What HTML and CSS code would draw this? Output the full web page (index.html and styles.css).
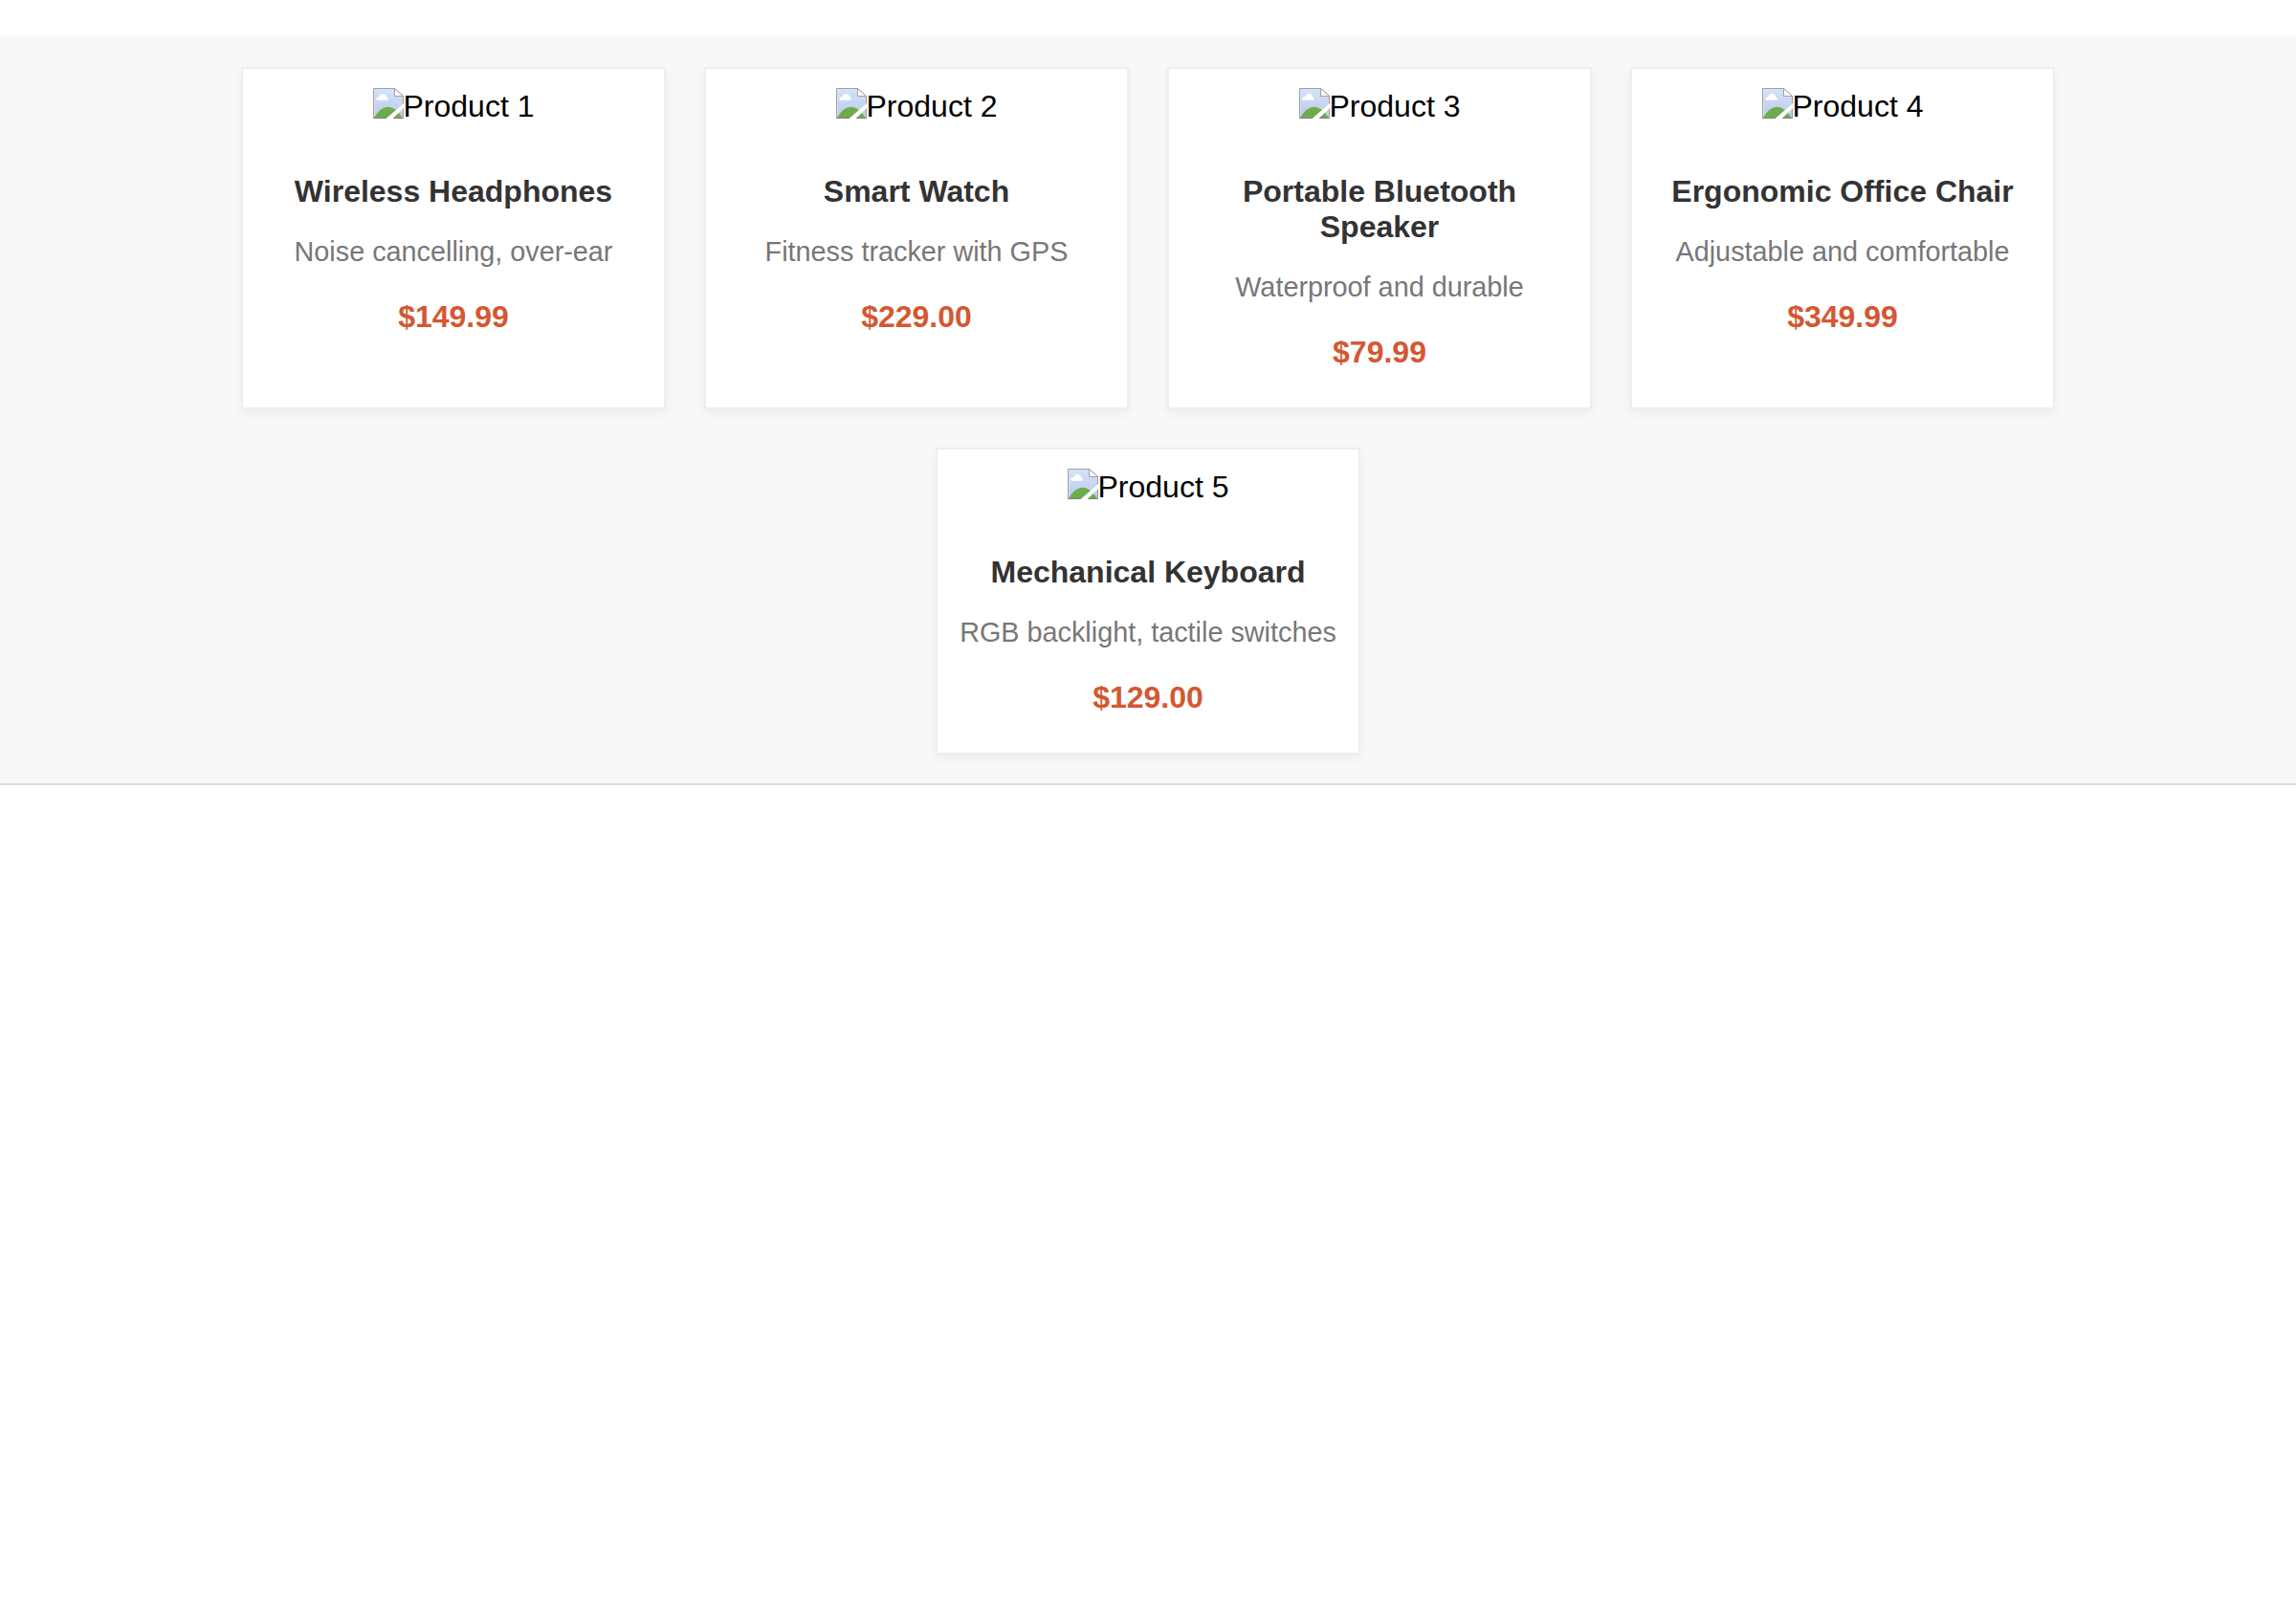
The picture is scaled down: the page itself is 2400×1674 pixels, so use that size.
FILE: index.html
```html
<!DOCTYPE html>
<html lang="en">
<head>
<meta charset="utf-8">
<title>Products</title>
<link rel="stylesheet" href="styles.css">
</head>
<body>
<svg class="defs" aria-hidden="true">
  <defs>
    <linearGradient id="sky" x1="0" y1="0" x2="0" y2="1">
      <stop offset="0" stop-color="#d6e3f9"/>
      <stop offset="1" stop-color="#b9c8ea"/>
    </linearGradient>
    <symbol id="missing" viewBox="0 0 32 32">
      <path d="M.5 .5H22.5L31.5 8.5V31.5H.5Z" fill="url(#sky)" stroke="#a0a0a0"/>
      <path d="M1.500 31V1.500H22" fill="none" stroke="#d6e2f8"/>
      <path d="M4.500 12.700Q3 12.700 3.200 11.200Q3.700 9.500 6.300 9.300Q7.300 6 10.300 6Q13.300 6.200 14 9.200Q16 10 15.900 11.600Q15.700 12.700 14.500 12.700Z" fill="#fff"/>
      <path d="M1 31Q8 19.700 15.500 19.700Q23.500 19.700 30.500 31Z" fill="#6dac4b"/>
      <path d="M.5 31.500H31.500" stroke="#808080"/>
      <path d="M13.500 32L32 16V21L20.500 32Z" fill="#fff"/>
      <path d="M22.500 .5V8.500H31.500Z" fill="#fff" stroke="#a0a0a0"/>
    </symbol>
  </defs>
</svg>
<main class="products">
  <article class="card">
    <div class="picture"><svg class="icon"><use href="#missing"/></svg><span>Product 1</span></div>
    <h3 class="name">Wireless Headphones</h3>
    <p class="description">Noise cancelling, over-ear</p>
    <p class="price">$149.99</p>
  </article>
  <article class="card">
    <div class="picture"><svg class="icon"><use href="#missing"/></svg><span>Product 2</span></div>
    <h3 class="name">Smart Watch</h3>
    <p class="description">Fitness tracker with GPS</p>
    <p class="price">$229.00</p>
  </article>
  <article class="card">
    <div class="picture"><svg class="icon"><use href="#missing"/></svg><span>Product 3</span></div>
    <h3 class="name">Portable Bluetooth Speaker</h3>
    <p class="description">Waterproof and durable</p>
    <p class="price">$79.99</p>
  </article>
  <article class="card">
    <div class="picture"><svg class="icon"><use href="#missing"/></svg><span>Product 4</span></div>
    <h3 class="name">Ergonomic Office Chair</h3>
    <p class="description">Adjustable and comfortable</p>
    <p class="price">$349.99</p>
  </article>
  <article class="card">
    <div class="picture"><svg class="icon"><use href="#missing"/></svg><span>Product 5</span></div>
    <h3 class="name">Mechanical Keyboard</h3>
    <p class="description">RGB backlight, tactile switches</p>
    <p class="price">$129.00</p>
  </article>
</main>
</body>
</html>
```
FILE: styles.css
```css
* {
  box-sizing: border-box;
}

body {
  margin: 0;
  padding-top: 40px;
  background: #fff;
  color: #000;
  font: 32px/37px "Liberation Sans", Arial, sans-serif;
}

.defs {
  display: block;
  width: 0;
  height: 0;
}

.products {
  display: flex;
  flex-wrap: wrap;
  justify-content: center;
  gap: 40px;
  padding: 30px 240px;
  background: #f8f8f8;
  border-bottom: 2px solid #ddd;
  box-shadow: 0 4px 10px rgba(0, 0, 0, 0.1);
}

.card {
  width: 444px;
  padding: 20px 20px 39px;
  background: #fff;
  border: 2px solid #eee;
  box-shadow: 0 4px 10px rgba(0, 0, 0, 0.05);
  text-align: center;
}

.picture {
  display: flex;
  justify-content: center;
  align-items: flex-start;
  height: 37px;
  line-height: 39px;
}

.icon {
  width: 32px;
  height: 32px;
}

.name {
  margin: 53px 0 28px;
  font-size: 32px;
  color: #333;
}

.description {
  margin: 0 0 33px;
  font-size: 28.8px;
  line-height: 33px;
  color: #777;
}

.price {
  margin: 0;
  font-weight: bold;
  color: #d35832;
}
```
